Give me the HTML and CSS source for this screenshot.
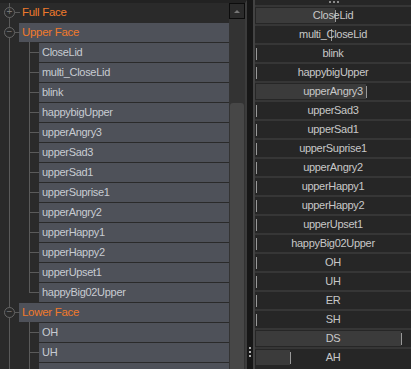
FILE: index.html
```html
<!DOCTYPE html>
<html lang="en">
<head>
    <meta charset="UTF-8">
    <title>Face Shapes</title>
    <link rel="stylesheet" href="styles.css">
</head>
<body>
    <div class="editor">

        <!-- shape tree -->
        <div class="tree">
            <div class="group collapsed"><span class="toggle">+</span>Full Face</div>

            <div class="group open"><span class="toggle">&minus;</span>Upper Face</div>
            <div class="children">
                <div class="item">CloseLid</div>
                <div class="item">multi_CloseLid</div>
                <div class="item">blink</div>
                <div class="item">happybigUpper</div>
                <div class="item">upperAngry3</div>
                <div class="item">upperSad3</div>
                <div class="item">upperSad1</div>
                <div class="item">upperSuprise1</div>
                <div class="item">upperAngry2</div>
                <div class="item">upperHappy1</div>
                <div class="item">upperHappy2</div>
                <div class="item">upperUpset1</div>
                <div class="item last">happyBig02Upper</div>
            </div>

            <div class="group open"><span class="toggle">&minus;</span>Lower Face</div>
            <div class="children">
                <div class="item">OH</div>
                <div class="item">UH</div>
                <div class="item"></div>
            </div>
        </div>

        <div class="scrollbar">
            <div class="scroll-up"><span class="arrow"></span></div>
            <div class="thumb"></div>
        </div>

        <div class="splitter">
            <span class="grip"></span>
            <span class="grip"></span>
            <span class="grip"></span>
        </div>

        <!-- slider values -->
        <div class="sliders">
            <div class="sliders-head">
                <span class="grip"></span><span class="grip"></span><span class="grip"></span>
            </div>
            <div class="slider"><span class="fill" style="width: 79px"></span><span class="label">CloseLid</span></div>
            <div class="slider"><span class="fill clear" style="width: 75px"></span><span class="label">multi_CloseLid</span></div>
            <div class="slider"><span class="fill" style="width: 0px"></span><span class="label">blink</span></div>
            <div class="slider"><span class="fill" style="width: 0px"></span><span class="label">happybigUpper</span></div>
            <div class="slider"><span class="fill" style="width: 110px"></span><span class="label">upperAngry3</span></div>
            <div class="slider"><span class="fill" style="width: 0px"></span><span class="label">upperSad3</span></div>
            <div class="slider"><span class="fill" style="width: 0px"></span><span class="label">upperSad1</span></div>
            <div class="slider"><span class="fill" style="width: 0px"></span><span class="label">upperSuprise1</span></div>
            <div class="slider"><span class="fill" style="width: 0px"></span><span class="label">upperAngry2</span></div>
            <div class="slider"><span class="fill" style="width: 0px"></span><span class="label">upperHappy1</span></div>
            <div class="slider"><span class="fill" style="width: 0px"></span><span class="label">upperHappy2</span></div>
            <div class="slider"><span class="fill" style="width: 0px"></span><span class="label">upperUpset1</span></div>
            <div class="slider"><span class="fill" style="width: 0px"></span><span class="label">happyBig02Upper</span></div>
            <div class="slider"><span class="fill" style="width: 0px"></span><span class="label">OH</span></div>
            <div class="slider"><span class="fill" style="width: 0px"></span><span class="label">UH</span></div>
            <div class="slider"><span class="fill" style="width: 0px"></span><span class="label">ER</span></div>
            <div class="slider"><span class="fill" style="width: 0px"></span><span class="label">SH</span></div>
            <div class="slider"><span class="fill" style="width: 145px"></span><span class="label">DS</span></div>
            <div class="slider"><span class="fill" style="width: 34px"></span><span class="label">AH</span></div>
        </div>
    </div>
</body>
</html>
```

FILE: styles.css
```css
* {
    margin: 0;
    padding: 0;
    box-sizing: border-box;
}

html, body {
    width: 411px;
    height: 369px;
    overflow: hidden;
}

body {
    font-family: "Liberation Sans", Arial, sans-serif;
    font-size: 11px;
    letter-spacing: -0.3px;
    background-color: #262626;
    color: #c8ccd2;
}

.editor {
    display: flex;
    height: 369px;
    overflow: hidden;
}

/* Tree */
.tree {
    width: 229px;
    flex-shrink: 0;
    background-color: #2a2a2a;
    border-top: 3px solid #222;
    /* main trunk line */
    background-image: linear-gradient(#5a5a5a, #5a5a5a);
    background-size: 1px 100%;
    background-position: 9px 0;
    background-repeat: no-repeat;
}

.group {
    position: relative;
    height: 19px;
    line-height: 19px;
    margin: 0 0 1px 19px;
    padding-left: 3px;
    color: #f07a2c;
    font-size: 11.5px;
}

.group.open {
    background-color: #4e5159;
}

.toggle {
    position: absolute;
    left: -15px;
    top: 4px;
    width: 11px;
    height: 11px;
    border: 1px solid #666;
    border-radius: 50%;
    background-color: #2a2a2a;
    color: #777;
    font-size: 10px;
    line-height: 8px;
    text-align: center;
    letter-spacing: 0;
}

.toggle::after {
    content: "";
    position: absolute;
    left: 10px;
    top: 4px;
    width: 5px;
    height: 1px;
    background-color: #5a5a5a;
}

.children {
    margin-left: 39px;
}

.item {
    position: relative;
    height: 19px;
    line-height: 19px;
    margin-bottom: 1px;
    padding-left: 3px;
    background-color: #4e5159;
}

/* branch lines */
.item::before {
    content: "";
    position: absolute;
    left: -10px;
    top: -1px;
    width: 1px;
    height: 21px;
    background-color: #5a5a5a;
}

.item.last::before {
    height: 11px;
}

.item::after {
    content: "";
    position: absolute;
    left: -10px;
    top: 9px;
    width: 10px;
    height: 1px;
    background-color: #5a5a5a;
}

/* Scrollbar */
.scrollbar {
    width: 18px;
    flex-shrink: 0;
    background-color: #333;
    border-top: 3px solid #222;
    border-right: 2px solid #3c3c3c;
}

.scroll-up {
    width: 16px;
    height: 16px;
    border: 1px solid #0c0c0c;
    background-color: #2b2b2b;
    display: flex;
    justify-content: center;
    align-items: center;
}

.arrow {
    width: 0;
    height: 0;
    border-left: 3px solid transparent;
    border-right: 3px solid transparent;
    border-bottom: 3px solid #777;
}

.thumb {
    margin: 84px 1px 0;
    height: 300px;
    background-color: #474747;
    border-radius: 3px 3px 0 0;
}

/* Splitter */
.splitter {
    width: 8px;
    flex-shrink: 0;
    background-color: #171717;
    border-right: 2px solid #434343;
    display: flex;
    flex-direction: column;
    justify-content: flex-end;
    align-items: center;
    gap: 2px;
    padding-bottom: 12px;
}

.grip {
    width: 2px;
    height: 2px;
    background-color: #b0b0b0;
}

/* Sliders */
.sliders {
    flex: 1;
    background-color: #262626;
}

.sliders-head {
    height: 5px;
    display: flex;
    justify-content: center;
    gap: 2px;
    padding-top: 1px;
    padding-left: 2px;
}

.sliders-head .grip {
    background-color: #8a8a8a;
}

.slider {
    position: relative;
    height: 19px;
    border-top: 2px solid #363636;
    text-align: center;
    line-height: 17px;
    color: #c8c8c8;
}

.fill {
    position: absolute;
    left: 1px;
    top: 1px;
    height: 15px;
    background-color: #3b3b3b;
}

/* value marker */
.fill::after {
    content: "";
    position: absolute;
    right: -1px;
    top: 2px;
    width: 1px;
    height: 12px;
    background-color: #999;
}

.fill.clear {
    background-color: transparent;
}

.label {
    position: relative;
}
```
